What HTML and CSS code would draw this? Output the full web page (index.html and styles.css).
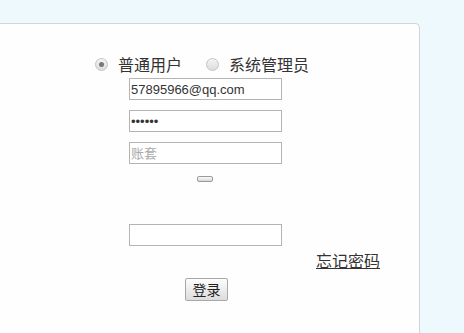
FILE: index.html
```html
<!doctype html>
<html><head>
<meta charset="utf-8">
<title>登录</title>
<link rel="stylesheet" href="styles.css">
</head>
<body>
<div class="panel">
	<div class="roles">
		<span class="radio checked"></span><span class="role">普通用户</span>
		<span class="radio"></span><span class="role">系统管理员</span>
	</div>
	<div class="fields">
		<input class="field" type="text" value="57895966@qq.com">
		<input class="field" type="password" value="123456">
		<input class="field" type="text" placeholder="账套">
		<button class="tiny"></button>
		<input class="field last" type="text">
	</div>
	<div class="forgot"><a href="#">忘记密码</a></div>
	<div class="submit"><button class="login">登录</button></div>
</div>
</body></html>
```

FILE: styles.css
```css
body {
	margin: 0;
	background: #eef9fd;
	font-family: "Noto Sans CJK SC", sans-serif;
	color: #333;
}
.panel {
	margin-top: 23px;
	width: 419px;
	height: 310px;
	background: #fefefe;
	border-top: 1px solid #cfd6d8;
	border-right: 1px solid #cfd6d8;
	border-top-right-radius: 5px;
}
.roles {
	display: flex;
	align-items: center;
	padding: 29px 0 0 95px;
	height: 22px;
	font-size: 16px;
}
.radio {
	width: 11px;
	height: 11px;
	border: 1px solid #c4c4c4;
	border-radius: 50%;
	background: linear-gradient(#f4f4f4, #dcdcdc);
	position: relative;
}
.radio.checked::after {
	content: "";
	position: absolute;
	left: 3px;
	top: 3px;
	width: 5px;
	height: 5px;
	border-radius: 50%;
	background: #777;
}
.role { margin: 0 24px 0 10px; }
.fields {
	display: flex;
	flex-direction: column;
	align-items: flex-start;
	padding: 3px 0 0 129px;
}
.field {
	box-sizing: border-box;
	width: 153px;
	height: 22px;
	margin: 0 0 10px 0;
	padding: 0 1px;
	border: 1px solid #b4b4b4;
	font: 13px "Liberation Sans", sans-serif;
	color: #333;
	outline: none;
}
.field::placeholder { color: #aaa; font-family: "Noto Sans CJK SC", sans-serif; }
.tiny {
	margin: 2px 0 0 68px;
	width: 16px;
	height: 6px;
	padding: 0;
	border: 1px solid #9a9a9a;
	border-radius: 2px;
	background: linear-gradient(#fafafa, #d8d8d8);
}
.field.last { margin-top: 42px; margin-bottom: 0; }
.forgot {
	padding: 4px 0 0 316px;
	font-size: 16px;
	line-height: 20px;
}
.forgot a { color: #333; }
.submit { padding: 6px 0 0 185px; }
.login {
	box-sizing: border-box;
	width: 43px;
	height: 23px;
	padding: 0;
	border: 1px solid #a8a8a8;
	border-radius: 2px;
	background: linear-gradient(#fdfdfd, #dcdcdc);
	font: 14px "Noto Sans CJK SC", sans-serif;
	color: #222;
}
```
